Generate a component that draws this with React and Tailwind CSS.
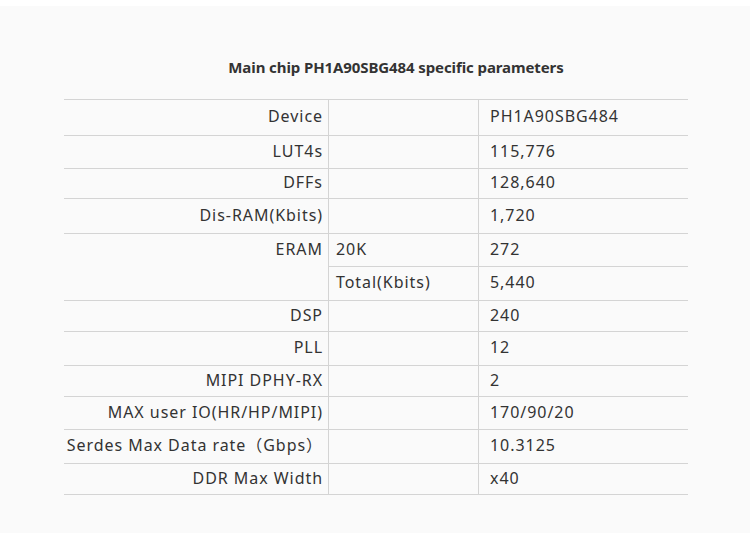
import React from "react";

const rows = [
  { a: "Device", b: "", c: "PH1A90SBG484", h: "h-[36px]" },
  { a: "LUT4s", b: "", c: "115,776", h: "h-[33px]" },
  { a: "DFFs", b: "", c: "128,640", h: "h-[30px]" },
  { a: "Dis-RAM(Kbits)", b: "", c: "1,720", h: "h-[35px]" },
];
const rows2 = [
  { a: "DSP", b: "", c: "240", h: "h-[31px]" },
  { a: "PLL", b: "", c: "12", h: "h-[34px]" },
  { a: "MIPI DPHY-RX", b: "", c: "2", h: "h-[31px]" },
  { a: "MAX user IO(HR/HP/MIPI)", b: "", c: "170/90/20", h: "h-[33px]" },
  { a: "Serdes Max Data rate（Gbps）", b: "", c: "10.3125", h: "h-[34px]" },
  { a: "DDR Max Width", b: "", c: "x40", h: "h-[31px]" },
];

function Row({ a, b, c, h }) {
  return (
    <div className={`flex ${h} border-b border-[#d4d4d4]`}>
      <div className="w-[265px] shrink-0 border-r border-[#d4d4d4] flex items-center justify-end pr-[5px] pb-[3px] whitespace-nowrap">
        {a}
      </div>
      <div className="w-[150px] shrink-0 border-r border-[#d4d4d4] flex items-center pl-[7px] pb-[3px]">{b}</div>
      <div className="flex-1 flex items-center pl-[11px] pb-[3px]">{c}</div>
    </div>
  );
}

export default function App() {
  return (
    <div className="w-[750px] h-[533px] bg-white">
      <div className="mt-[6px] h-[527px] bg-[#fafafa] pt-[51px]">
        <div
          className="pl-[42px] text-center text-[15px] font-bold text-[#333] leading-[20px] tracking-[-0.1px]"
          style={{ fontFamily: '"Noto Sans", "Noto Sans CJK SC", sans-serif' }}
        >
          Main chip PH1A90SBG484 specific parameters
        </div>
        <div
          className="ml-[64px] mt-[22px] w-[624px] border-t border-[#d4d4d4] text-[16px] text-[#333] tracking-[0.95px]"
          style={{ fontFamily: '"Noto Sans", "Noto Sans CJK SC", sans-serif' }}
        >
          {rows.map((r) => (
            <Row key={r.a} {...r} />
          ))}
          <div className="flex border-b border-[#d4d4d4]">
            <div className="w-[265px] shrink-0 border-r border-[#d4d4d4] flex justify-end pr-[5px]">
              <div className="h-[33px] flex items-center pb-[3px]">ERAM</div>
            </div>
            <div className="flex-1 flex flex-col">
              <div className="flex h-[33px] border-b border-[#d4d4d4]">
                <div className="w-[150px] shrink-0 border-r border-[#d4d4d4] flex items-center pl-[7px] pb-[3px]">20K</div>
                <div className="flex-1 flex items-center pl-[11px] pb-[3px]">272</div>
              </div>
              <div className="flex h-[33px]">
                <div className="w-[150px] shrink-0 border-r border-[#d4d4d4] flex items-center pl-[7px] pb-[3px]">Total(Kbits)</div>
                <div className="flex-1 flex items-center pl-[11px] pb-[3px]">5,440</div>
              </div>
            </div>
          </div>
          {rows2.map((r) => (
            <Row key={r.a} {...r} />
          ))}
        </div>
      </div>
    </div>
  );
}
